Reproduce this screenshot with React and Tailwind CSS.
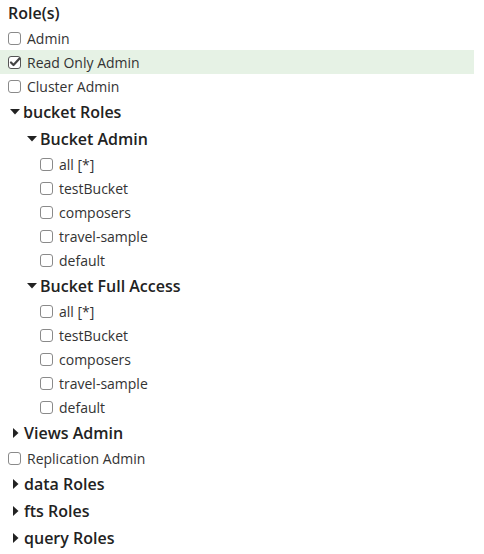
function Box({ checked }) {
  return (
    <svg width="13" height="13" viewBox="0 0 13 13" className="shrink-0">
      <rect x="0.5" y="0.5" width="12" height="12" rx="2.5" fill="#fff" stroke={checked ? '#555' : '#8a8a8a'} />
      {checked && (
        <path d="M3 6.5 L5.5 9 L11.5 2.5" fill="none" stroke="#444" strokeWidth="2.2" strokeLinecap="round" strokeLinejoin="round" />
      )}
    </svg>
  );
}

function CaretDown() {
  return (
    <svg width="10" height="6" viewBox="0 0 10 6" className="shrink-0">
      <path d="M0 0 H10 L5 5.5 Z" fill="#222" />
    </svg>
  );
}

function CaretRight() {
  return (
    <svg width="6" height="10" viewBox="0 0 6 10" className="shrink-0">
      <path d="M0 0 V10 L5.5 5 Z" fill="#222" />
    </svg>
  );
}

function Check({ label, checked, indent = 'pl-2' }) {
  return (
    <div className={`flex h-6 items-center gap-[6px] ${indent} ${checked ? 'bg-[#e6f2e5]' : ''}`}>
      <Box checked={checked} />
      <span className="text-[14px] text-[#333]">{label}</span>
    </div>
  );
}

function Group({ label, open, indent = 'pl-[10px]' }) {
  return (
    <div className={`flex h-[27px] items-center ${indent} ${open ? 'gap-[3px]' : 'gap-[5px] pl-[13px]'}`}>
      {open ? <CaretDown /> : <CaretRight />}
      <span className="text-[16px] font-semibold text-[#222]">{label}</span>
    </div>
  );
}

const buckets = ['all [*]', 'testBucket', 'composers', 'travel-sample', 'default'];

export default function App() {
  return (
    <div className="w-[474px] bg-white pb-[3px]" style={{ fontFamily: '"Open Sans", sans-serif' }}>
      <div className="flex h-[26px] items-center pl-2 text-[16px] font-semibold text-[#222]">Role(s)</div>
      <Check label="Admin" />
      <Check label="Read Only Admin" checked />
      <Check label="Cluster Admin" />
      <Group label="bucket Roles" open />
      <Group label="Bucket Admin" open indent="pl-[27px]" />
      {buckets.map((b) => (
        <Check key={'a' + b} label={b} indent="pl-[40px]" />
      ))}
      <Group label="Bucket Full Access" open indent="pl-[27px]" />
      {buckets.map((b) => (
        <Check key={'f' + b} label={b} indent="pl-[40px]" />
      ))}
      <Group label="Views Admin" />
      <Check label="Replication Admin" />
      <Group label="data Roles" />
      <Group label="fts Roles" />
      <Group label="query Roles" />
    </div>
  );
}
